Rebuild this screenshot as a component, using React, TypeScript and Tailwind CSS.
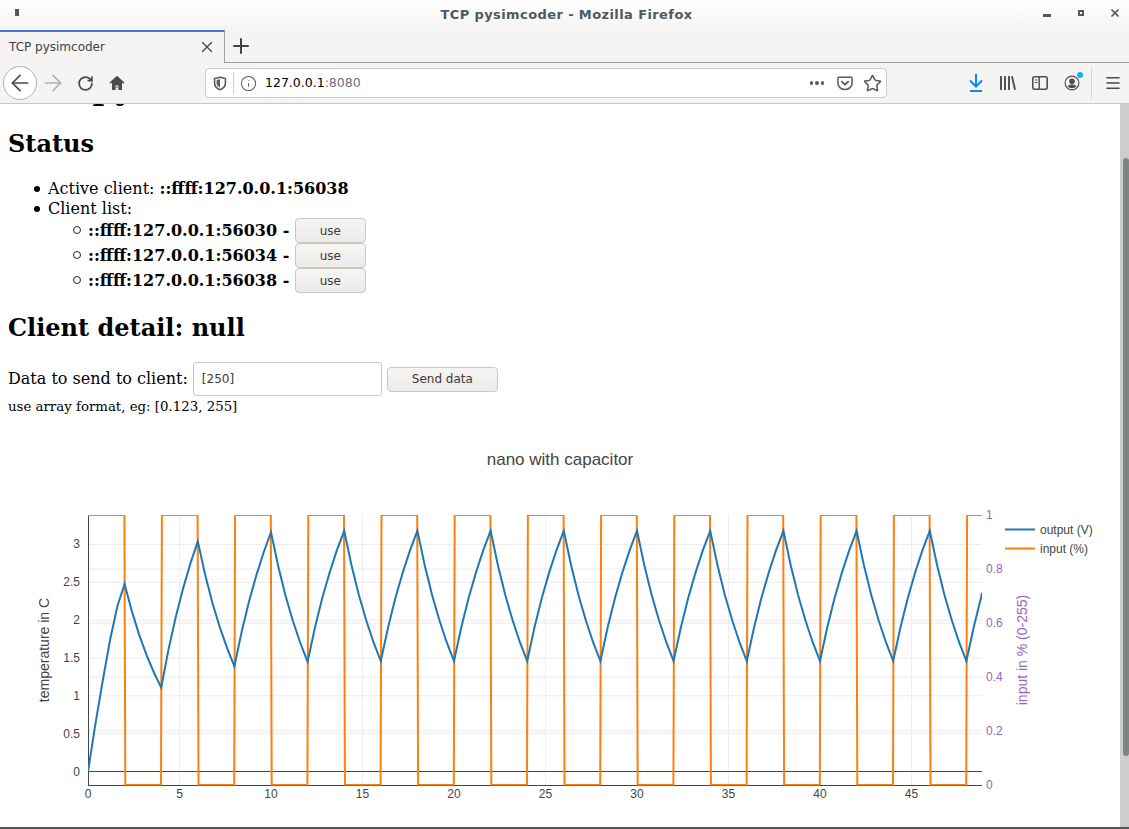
import React from 'react';
import { ArrowLeft, ArrowRight, Info, Menu, Plus, RotateCw, Star, X } from 'lucide-react';

const levels = [0, 2.477, 1.11, 3.04, 1.39, 3.16, 1.45, 3.18, 1.46];
const levelAt = (i: number) => (i < levels.length ? levels[i] : i % 2 ? 3.18 : 1.46);

const px = (t: number) => 80 + 18.3 * t;
const yLeft = (v: number) => 356.5 - 75.7 * v;
const yRight = (v: number) => 370 - 270 * v;
const tEnd = 48.85;

// first charge read off the picture, the rest follow a curve
const firstCharge = [0, 0.25, 0.48, 0.7, 0.88];

const curve = (i: number, s: number, step: number) => {
  const a = levelAt(i);
  const b = levelAt(i + 1);
  if (i === 0) return b * firstCharge[step];
  const r = i % 2 ? 0.47 : 0.5;
  return a + ((b - a) * (1 - Math.pow(r, s / 2))) / (1 - r);
};

function outputPath() {
  const pts: string[] = [];
  for (let i = 0; i * 2 < tEnd; i++) {
    for (let step = 0; step < 5; step++) {
      const s = step * 0.4;
      const t = i * 2 + s;
      if (t > tEnd) break;
      pts.push(`${px(t).toFixed(1)},${yLeft(curve(i, s, step)).toFixed(1)}`);
    }
  }
  pts.push(`${px(tEnd).toFixed(1)},${yLeft(2.36).toFixed(1)}`);
  return pts.join(' ');
}

function inputPath() {
  const pts: string[] = [`${px(0)},${yRight(1)}`];
  for (let t = 2; t < tEnd; t += 2) {
    const high = (t / 2) % 2 === 1;
    pts.push(`${px(t - 0.01).toFixed(1)},${yRight(high ? 1 : 0)}`);
    pts.push(`${px(t + 0.04).toFixed(1)},${yRight(high ? 0 : 1)}`);
  }
  pts.push(`${px(tEnd).toFixed(1)},${yRight(1)}`);
  return pts.join(' ');
}

function Chart() {
  const xTicks = [0, 5, 10, 15, 20, 25, 30, 35, 40, 45];
  const leftTicks = [0, 0.5, 1, 1.5, 2, 2.5, 3];
  const rightTicks = [0, 0.2, 0.4, 0.6, 0.8, 1];
  return (
    <svg className="block w-[1104px] h-[450px] shrink-0" viewBox="0 0 1104 450" style={{ overflow: 'visible' }} fontFamily="'Liberation Sans', sans-serif">
      <defs>
        <clipPath id="plot-area">
          <rect x="80" y="100" width="894" height="270.500" />
        </clipPath>
      </defs>
      <text x="552" y="50" textAnchor="middle" fontSize="17" fill="#444">nano with capacitor</text>
      {xTicks.slice(1).map((t) => (
        <line key={t} x1={px(t)} x2={px(t)} y1="100" y2="370" stroke="#eee" />
      ))}
      {leftTicks.slice(1).map((v) => (
        <line key={v} x1="80" x2={px(tEnd)} y1={yLeft(v)} y2={yLeft(v)} stroke="#eaeaea" />
      ))}
      {rightTicks.slice(1, 5).map((v) => (
        <line key={v} x1="80" x2={px(tEnd)} y1={yRight(v)} y2={yRight(v)} stroke="#eaeaea" />
      ))}
      <line x1="80" x2={px(tEnd)} y1="356.5" y2="356.5" stroke="#444" />
      <line x1="80.5" x2="80.5" y1="100" y2="370" stroke="#444" />
      <line x1="80" x2={px(tEnd)} y1="370.5" y2="370.5" stroke="#444" />
      <g clipPath="url(#plot-area)">
        <polyline points={inputPath()} fill="none" stroke="#ff7f0e" strokeWidth="2" />
        <polyline points={outputPath()} fill="none" stroke="#1f77b4" strokeWidth="2" />
      </g>
      {xTicks.map((t) => (
        <text key={t} x={px(t)} y="383" textAnchor="middle" fontSize="12" fill="#444">{t}</text>
      ))}
      {leftTicks.map((v) => (
        <text key={v} x="72" y={yLeft(v) + 4} textAnchor="end" fontSize="12" fill="#444">{v}</text>
      ))}
      {rightTicks.map((v) => (
        <text key={v} x="978" y={yRight(v) + 4} fontSize="12" fill="#9467bd">{v}</text>
      ))}
      <text transform="translate(41 235) rotate(-90)" textAnchor="middle" fontSize="14" fill="#444">temperature in C</text>
      <text transform="translate(1019 235) rotate(-90)" textAnchor="middle" fontSize="14" fill="#9467bd">input in % (0-255)</text>
      <text x="525" y="423" textAnchor="middle" fontSize="14" fill="#444">time (sec)</text>
      <line x1="997" x2="1027" y1="114.5" y2="114.5" stroke="#1f77b4" strokeWidth="2" />
      <line x1="997" x2="1027" y1="133.5" y2="133.5" stroke="#ff7f0e" strokeWidth="2" />
      <text x="1032" y="119" fontSize="12" fill="#444">output (V)</text>
      <text x="1032" y="138" fontSize="12" fill="#444">input (%)</text>
    </svg>
  );
}

function Shield() {
  return (
    <svg width="14" height="15" viewBox="0 0 14 15" fill="none">
      <path d="M7 1.200 1.600 2.600v4.600c0 3 2.300 5.300 5.400 6.600 3.100-1.300 5.400-3.600 5.400-6.600V2.600z" stroke="#5b5b60" strokeWidth="1.600" />
      <path d="M7 3.200 3.600 4v3.200c0 2 1.400 3.400 3.400 4.400z" fill="#5b5b60" />
    </svg>
  );
}

function Pocket() {
  return (
    <svg width="16" height="15" viewBox="0 0 16 15" fill="none">
      <path d="M1.800 1.200h12.400c.5 0 .9.400.9.900v5c0 3.400-3.100 6.500-7.100 6.500S.9 10.500.9 7.100v-5c0-.5.400-.9.900-.9z" stroke="#5b5b60" strokeWidth="1.500" />
      <path d="m4.800 5.600 3.200 3 3.200-3" stroke="#5b5b60" strokeWidth="1.800" strokeLinecap="round" strokeLinejoin="round" />
    </svg>
  );
}

function HomeIcon() {
  return (
    <svg width="16" height="16" viewBox="0 0 16 16" fill="none">
      <path d="M8 .8.600 7.600l1 1.100L3 7.500V15h10V7.500l1.400 1.200 1-1.100z" fill="#4a4a4f" />
      <path d="M6.600 15v-4.600h2.800V15z" fill="#f5f4f2" />
      <path d="M7.300 11.500h1.400v1.200H7.300z" fill="#4a4a4f" />
    </svg>
  );
}

function DownloadIcon() {
  return (
    <svg width="14" height="18" viewBox="0 0 14 18" fill="none" stroke="#0a84ff" strokeWidth="2">
      <path d="M7 0v12" />
      <path d="M1.500 7 7 12.500 12.500 7" strokeLinecap="round" />
      <path d="M1 17h12" />
    </svg>
  );
}

function Library() {
  return (
    <svg width="16" height="14" viewBox="0 0 16 14" fill="#4f4f54">
      <rect x="0" y="0" width="2" height="14" rx="0.500" />
      <rect x="4" y="0" width="2" height="14" rx="0.500" />
      <rect x="8" y="0" width="2" height="14" rx="0.500" />
      <path d="M11 .4 12.800 0l3.200 13.500-1.900.5z" />
    </svg>
  );
}

function Sidebar() {
  return (
    <svg width="16" height="14" viewBox="0 0 16 14" fill="none">
      <rect x="0.800" y="0.800" width="14.400" height="12.400" rx="2" stroke="#4f4f54" strokeWidth="1.600" />
      <path d="M7.200 1v12" stroke="#4f4f54" strokeWidth="1.500" />
      <path d="M2.800 4h2.700M2.800 6.500h2.700" stroke="#4f4f54" strokeWidth="1.200" />
    </svg>
  );
}

function Account() {
  return (
    <div className="relative w-[16px] h-[16px]">
      <svg width="16" height="16" viewBox="0 0 16 16" fill="none">
        <circle cx="8" cy="8" r="6.900" stroke="#4f4f54" strokeWidth="1.200" />
        <circle cx="8" cy="6.300" r="2.800" fill="#4f4f54" />
        <path d="M3.500 11.200c1.200-1.400 2.800-1.800 4.500-1.800s3.300.4 4.500 1.800c-1 1.300-2.700 2-4.500 2s-3.500-.7-4.500-2z" fill="#4f4f54" />
      </svg>
      <span className="absolute -top-[3px] -right-[3px] w-[6px] h-[6px] rounded-full bg-[#0fb4ff]" />
    </div>
  );
}

function ClientRow({ address }: { address: string }) {
  return (
    <li className="relative h-[25px] leading-[25px] before:absolute before:left-[-15px] before:top-[8px] before:w-[8px] before:h-[8px] before:rounded-full before:border before:border-[#222]">
      <b className="font-bold">{address} - </b>
      <button className="w-[71px] h-[25px] pt-px align-top text-[12px] leading-[23px] font-['DejaVu_Sans',sans-serif] text-[#3d3a38] border border-[#cdc7c2] rounded-[4px] bg-gradient-to-b from-[#f6f5f4] to-[#edebe9]">use</button>
    </li>
  );
}

const discClass = "relative before:absolute before:left-[-14px] before:top-[7px] before:w-[6px] before:h-[6px] before:rounded-full before:bg-black";

export default function App() {
  return (
    <div className="w-[1129px] h-[829px] overflow-hidden flex flex-col bg-white font-['Liberation_Sans',sans-serif]">
      <div className="h-[30px] shrink-0 relative flex items-center justify-center bg-gradient-to-b from-white to-[#f5f4f2]">
        <span className="absolute left-[15px] top-[9px] w-[4px] h-[7px] bg-[#4f5b63]" />
        <span className="ml-[4px] text-[13px] font-bold tracking-[0.4px] text-[#4c5a63] font-['DejaVu_Sans',sans-serif]">TCP pysimcoder - Mozilla Firefox</span>
        <span className="absolute left-[1043px] top-[14px] w-[8px] h-[3px] bg-[#4f5b63]" />
        <span className="absolute left-[1078px] top-[10px] w-[6px] h-[6px] border-2 border-[#4f5b63]" />
        <X className="absolute left-[1109px] top-[7px] w-[12px] h-[12px] text-[#4f5b63]" strokeWidth={3.500} />
      </div>

      <div className="h-[33px] shrink-0 flex bg-[#f5f4f2]">
        <div className="w-[225px] h-[33px] flex items-center pl-[9px] pr-[8px] pb-[2px] border-t-[2px] border-t-[#3b7cc4] border-r border-r-[#a3a19e] bg-[#f5f4f2] text-[12px] text-[#3f4248] font-['DejaVu_Sans',sans-serif]">
          <span className="flex-1">TCP pysimcoder</span>
          <X className="w-[18px] h-[18px] text-[#4a4a4f]" strokeWidth={1.800} />
        </div>
        <div className="flex-1 flex items-center border-b border-b-[#a3a19e] pl-[4px]">
          <Plus className="w-[24px] h-[24px] text-[#3f4248]" strokeWidth={2} />
        </div>
      </div>

      <div className="h-[41px] shrink-0 flex items-center bg-[#f5f4f2] border-b border-b-[#c8c6c2]">
        <div className="ml-[3px] w-[34px] h-[34px] rounded-full border border-[#b3b1ae] bg-white flex items-center justify-center">
          <ArrowLeft className="w-[26px] h-[26px] text-[#4a4a4f]" strokeWidth={1.600} />
        </div>
        <ArrowRight className="ml-[3px] w-[26px] h-[26px] text-[#b1b1b3]" strokeWidth={1.600} />
        <RotateCw className="ml-[11px] w-[17px] h-[17px] text-[#4a4a4f]" strokeWidth={2.500} />
        <div className="ml-[15px]"><HomeIcon /></div>
        <div className="ml-[80px] w-[682px] h-[30px] flex items-center rounded-[4px] border border-[#cdcac5] bg-white text-[12.500px] font-['DejaVu_Sans',sans-serif]">
          <div className="w-[27px] h-[22px] flex items-center justify-center border-r border-r-[#d4d2ce] ml-[1px]">
            <Shield />
          </div>
          <Info className="ml-[6px] w-[17px] h-[17px] text-[#5b5b60]" strokeWidth={1.500} />
          <span className="ml-[8px] text-black">127.0.0.1<span className="text-[#6f6f74]">:8080</span></span>
          <div className="flex-1" />
          <span className="flex gap-[2px]">
            <span className="w-[3.500px] h-[3.500px] rounded-full bg-[#5b5b60]" />
            <span className="w-[3.500px] h-[3.500px] rounded-full bg-[#5b5b60]" />
            <span className="w-[3.500px] h-[3.500px] rounded-full bg-[#5b5b60]" />
          </span>
          <div className="ml-[13px]"><Pocket /></div>
          <Star className="ml-[10px] mr-[4px] w-[19px] h-[19px] text-[#5b5b60]" strokeWidth={2} />
        </div>
        <div className="ml-[82px]"><DownloadIcon /></div>
        <div className="ml-[17px]"><Library /></div>
        <div className="ml-[16px]"><Sidebar /></div>
        <div className="ml-[16px]"><Account /></div>
        <div className="ml-[11px] w-px h-[33px] bg-[#dbd9d5]" />
        <Menu className="ml-[12px] w-[18px] h-[18px] text-[#4a4a4f]" strokeWidth={2.200} />
      </div>

      <div className="flex-1 min-h-0 flex">
        <div className="w-[1120px] overflow-hidden px-[8px] text-[16px] leading-[20px] text-black font-['DejaVu_Serif',serif]">
          <h1 className="-mt-[34px] mb-[23px] text-[32px] leading-[37px] font-bold">TCP pysimcoder</h1>
          <h2 className="text-[24px] leading-[28px] font-bold">Status</h2>
          <ul className="mt-[21px]">
            <li className={`ml-[40px] ${discClass}`}>Active client: <b className="font-bold">::ffff:127.0.0.1:56038</b></li>
            <li className={`ml-[40px] ${discClass}`}>
              Client list:
              <ul className="pl-[40px] -mt-px">
                <ClientRow address="::ffff:127.0.0.1:56030" />
                <ClientRow address="::ffff:127.0.0.1:56034" />
                <ClientRow address="::ffff:127.0.0.1:56038" />
              </ul>
            </li>
          </ul>
          <h2 className="mt-[21px] text-[24px] leading-[28px] font-bold">Client detail: null</h2>
          <div className="mt-[20px] flex items-center">
            <span>Data to send to client:</span>
            <input defaultValue="[250]" className="ml-[5px] w-[189px] h-[34px] px-[8px] text-[12px] text-[#3d3a38] font-['DejaVu_Sans',sans-serif] border border-[#cdc7c2] rounded-[3px] bg-white" />
            <button className="ml-[5px] w-[111px] h-[25px] text-[12px] text-[#3d3a38] font-['DejaVu_Sans',sans-serif] border border-[#cdc7c2] rounded-[4px] bg-gradient-to-b from-[#f6f5f4] to-[#edebe9]">Send data</button>
          </div>
          <div className="mt-[3px] text-[13.330px] leading-[16px]">use array format, eg: [0.123, 255]</div>
          <Chart />
        </div>
        <div className="w-[9px] bg-[#cdcdcd] pl-[3px]">
          <div className="mt-[54px] h-[598px] w-[6px] rounded-[3px] bg-[#7f8484]" />
        </div>
      </div>
      <div className="h-[2px] shrink-0 bg-[#555]" />
    </div>
  );
}
